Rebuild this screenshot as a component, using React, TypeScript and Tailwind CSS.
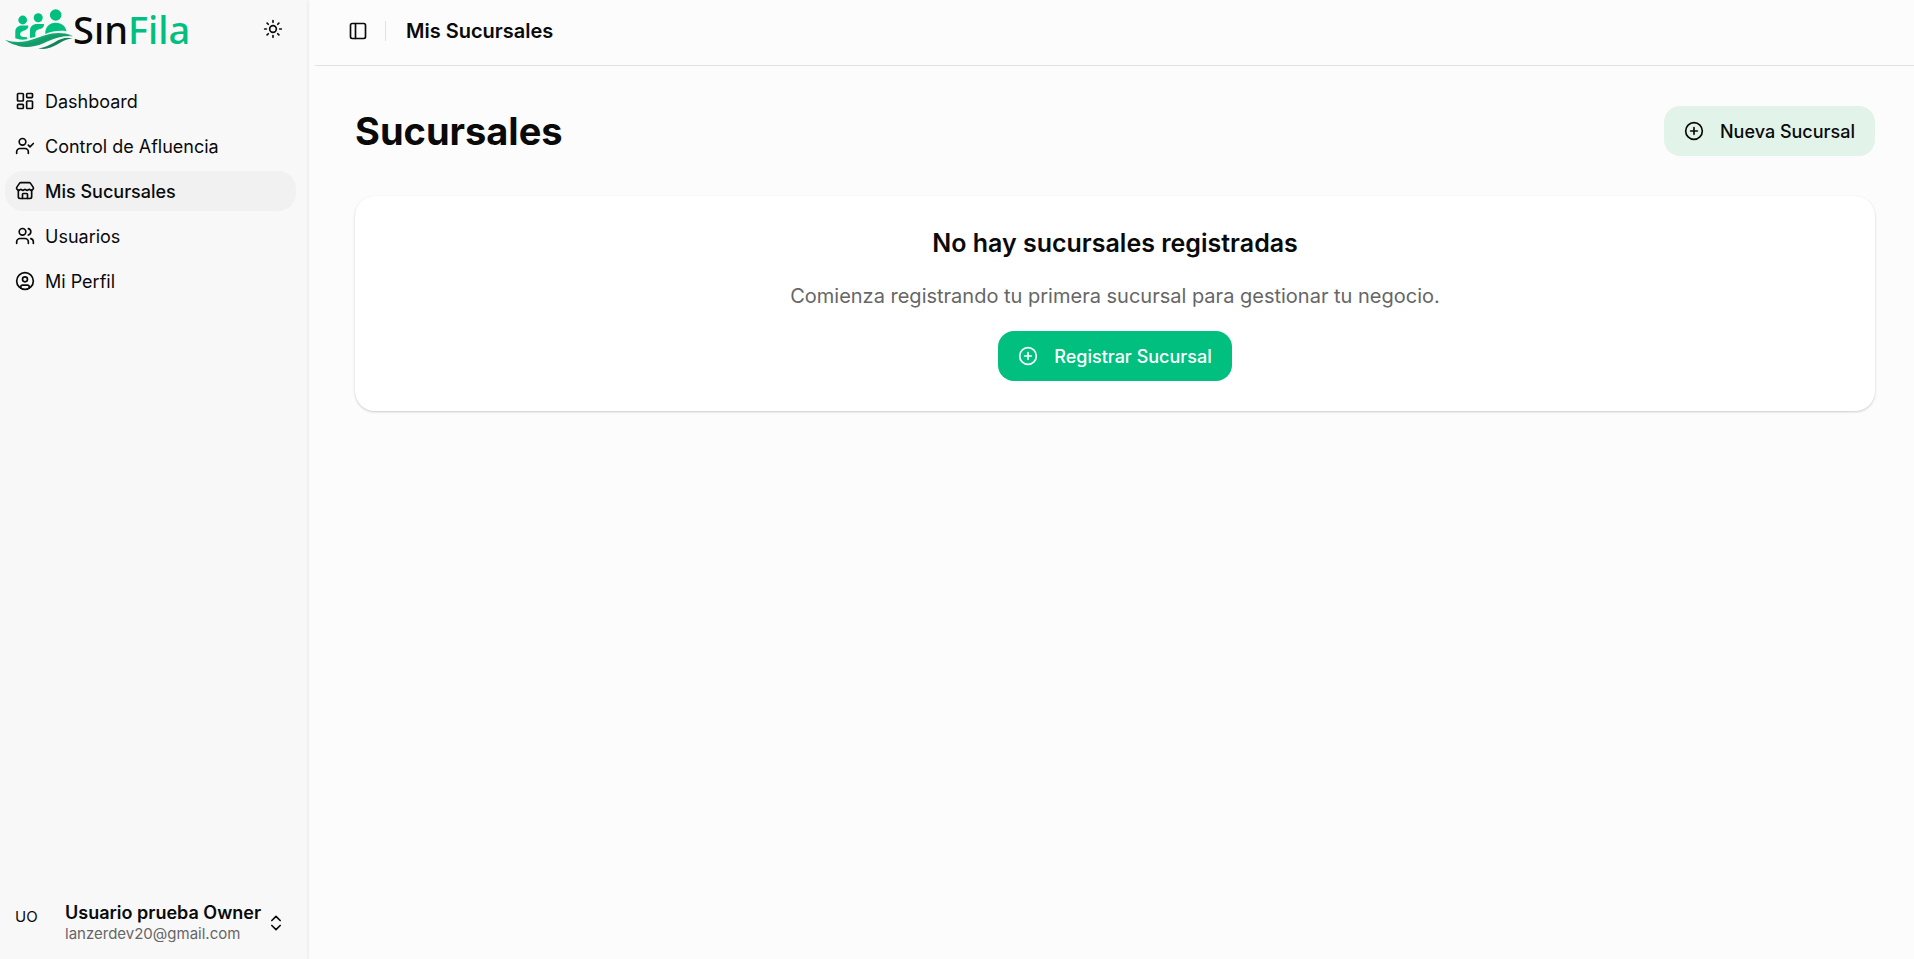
import {
  ChevronsUpDown,
  CirclePlus,
  CircleUser,
  LayoutDashboard,
  PanelLeft,
  Store,
  Sun,
  UserCheck,
  Users,
} from "lucide-react";
import type { LucideIcon } from "lucide-react";

type NavItem = { label: string; icon: LucideIcon; active?: boolean };

const navItems: NavItem[] = [
  { label: "Dashboard", icon: LayoutDashboard },
  { label: "Control de Afluencia", icon: UserCheck },
  { label: "Mis Sucursales", icon: Store, active: true },
  { label: "Usuarios", icon: Users },
  { label: "Mi Perfil", icon: CircleUser },
];

function LogoMark() {
  return (
    <svg viewBox="5 8 69 42" className="h-[42px] w-[69px] shrink-0" aria-hidden="true">
      <g fill="#00bf7f">
        <circle cx="22.7" cy="20" r="4.4" />
        <circle cx="38.2" cy="17.7" r="4.5" />
        <circle cx="55.7" cy="15" r="5.8" />
        <path d="M15.3 38.3V32c0-4 2.7-6.400 6.700-6.400h6.300c0 3.300-1.900 4.400-4.700 5.200-2.600.8-3.600 2-3.400 4 .2 1.700 1.700 2.200 3.600 2.200l3.500.3-.5 1.900c-4 .8-8 .5-11.500-.9Z" />
        <path d="M30 38V30.500c0-4.200 3-6.600 7-6.600h7c0 3.500-2 4.600-5 5.300-2.800.7-3.600 2-3.600 4.300v3.200c-1.800.7-3.600 1.100-5.400 1.300Z" />
        <path d="M45.300 33c0-6 4-10.300 10.300-10.300 6.400 0 10.200 3.600 10.900 8.600-7.500-1.300-14 .2-21.200 2.600Z" />
      </g>
      <path d="M5 39.700c9 3.300 19 2.900 29-.6C45.500 34.800 57 29.800 73 35.700 60 34.600 49.500 37.500 39 42 26 47.300 13 46.700 5 39.700Z" fill="#12a871" />
      <path d="M12 42.500C22 45 30 43.500 40.500 39.300 51 35 61.500 32 73 36.500 61 35.500 53.500 39 43.500 43.300 31 48.600 19 48.300 12 42.500Z" fill="#129c69" />
      <path d="M38 48.200c7.200-.6 11.700-3.400 17.500-6.500 5.500-2.900 10.500-5 17-3.200-6.500.4-10 2.900-15 5.700-6 3.500-12 6-19.500 4Z" fill="#118559" />
      <path d="M40 46.500c7-2.800 11-5.300 17-7.600 4.500-1.700 9-2.500 14-1.700" fill="none" stroke="#f8f8f8" />
    </svg>
  );
}

function Sidebar() {
  return (
    <aside className="flex w-[308px] shrink-0 flex-col border-r border-[#f0f0f0] bg-[#f8f8f8] pr-[11px] pl-[5px] shadow-sm">
      <header className="flex items-center justify-between pt-1 pr-[7px]">
        <a href="#inicio" aria-label="SinFila" className="flex h-[50px] items-center">
          <LogoMark />
          <span className="-ml-px font-['Noto_Sans',sans-serif] text-[38px] leading-[50px] font-medium text-[#0a0a0a]">
            Sın<span className="text-[#00bf7f]">Fila</span>
          </span>
        </a>
        <button type="button" aria-label="Cambiar tema" className="p-1.5">
          <Sun size={20} />
        </button>
      </header>
      <nav className="mt-[27px] flex flex-col gap-[5px]">
        {navItems.map(({ label, icon: Icon, active }) => (
          <a
            key={label}
            href={"#" + label.toLowerCase().replace(/ /g, "-")}
            aria-current={active ? "page" : undefined}
            className={
              active
                ? "flex h-10 items-center gap-2.5 rounded-[18px] bg-[#f1f1f1] px-2.5 font-medium"
                : "flex h-10 items-center gap-2.5 rounded-[18px] px-2.5"
            }
          >
            <Icon size={20} />
            <span className="pt-0.5">{label}</span>
          </a>
        ))}
      </nav>
      <button type="button" className="mt-auto mb-[15px] flex items-center px-2.5 text-left">
        <span className="w-10 pb-3 text-[15px]">UO</span>
        <span className="ml-2.5 flex flex-1 flex-col">
          <span className="leading-[22px] font-semibold">Usuario prueba Owner</span>
          <span className="text-[15px] leading-5 text-[#666666]">lanzerdev20@gmail.com</span>
        </span>
        <ChevronsUpDown size={20} />
      </button>
    </aside>
  );
}

export default function App() {
  return (
    <div className="flex min-h-screen bg-[#fcfcfc] font-['Inter',sans-serif] text-[18px] leading-6 text-[#0a0a0a]">
      <Sidebar />
      <div className="flex min-w-0 flex-1 flex-col pl-[7px]">
        <header className="flex h-[66px] items-center border-b border-[#e2e2e2] px-[31px] pb-1">
          <button type="button" aria-label="Alternar barra lateral" className="p-1 pl-0.5">
            <PanelLeft size={20} />
          </button>
          <span className="ml-[13px] h-5 w-px bg-[#e2e2e2]" />
          <span className="ml-5 text-[20px] leading-7 font-semibold">Mis Sucursales</span>
        </header>
        <main className="pt-10 pr-[39px] pl-10">
          <div className="flex items-center justify-between">
            <h1 className="text-[38px] leading-[50px] font-bold">Sucursales</h1>
            <button
              type="button"
              className="flex h-[50px] items-center gap-4 rounded-[16px] bg-[#e2f3e9] px-5 font-medium"
            >
              <CirclePlus size={20} />
              <span className="pt-0.5">Nueva Sucursal</span>
            </button>
          </div>
          <section className="mt-10 flex flex-col items-center rounded-[20px] bg-white py-[30px] shadow-[0_1px_3px_rgba(0,0,0,0.1),0_1px_2px_rgba(0,0,0,0.1)]">
            <h2 className="text-[25px] leading-[35px] font-semibold">No hay sucursales registradas</h2>
            <p className="mt-5 text-[20px] leading-[30px] text-[#666666]">
              Comienza registrando tu primera sucursal para gestionar tu negocio.
            </p>
            <button
              type="button"
              className="mt-5 flex h-[50px] items-center gap-4 rounded-[16px] bg-[#00bf7f] px-5 font-medium text-white"
            >
              <CirclePlus size={20} />
              <span className="pt-0.5">Registrar Sucursal</span>
            </button>
          </section>
        </main>
      </div>
    </div>
  );
}
